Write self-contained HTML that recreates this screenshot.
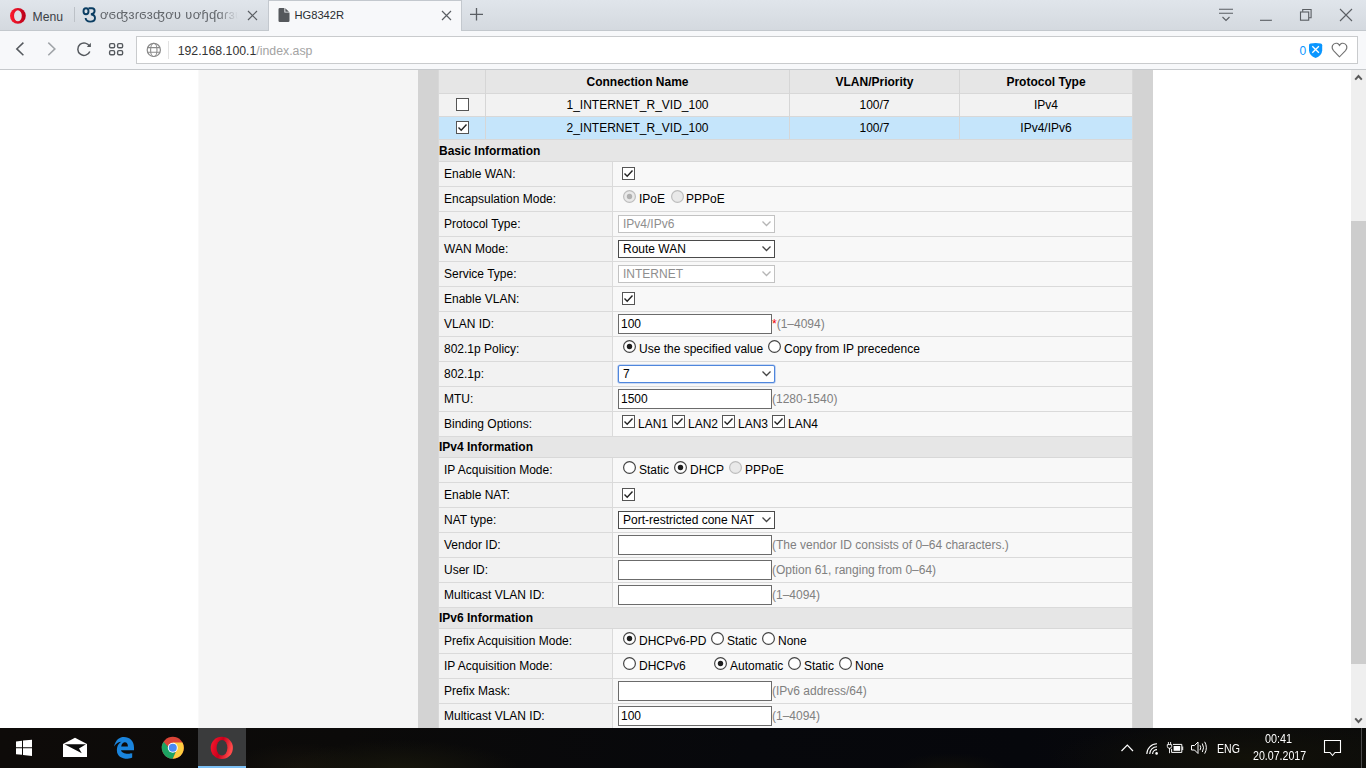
<!DOCTYPE html><html><head><meta charset="utf-8"><style>
*{margin:0;padding:0;box-sizing:border-box}
html,body{width:1366px;height:768px;overflow:hidden;background:#fff;font-family:"Liberation Sans",sans-serif;font-size:12px;color:#000;position:relative}
.abs{position:absolute}
#tabbar{left:0;top:0;width:1366px;height:31px;background:linear-gradient(#e0e5eb,#d4d9df);border-bottom:1px solid #c3c8cd}
#toolbar{left:0;top:31px;width:1366px;height:39px;background:#f7f8fa;border-bottom:1px solid #c6c9cc}
#addr{left:136px;top:36px;width:1222px;height:28px;background:#fff;border:1px solid #c9cbcd}
.t{white-space:nowrap;line-height:14px}
.cell{position:absolute;white-space:nowrap}
.lab{left:6px;top:5px}
.hint{color:#808080}
.inp{position:absolute;width:154px;height:20px;border:1px solid #6b6b6b;background:#fff;padding-left:2px;line-height:18px}
.sel{position:absolute;width:157px;height:18px;border:1px solid #4a4a4a;background:#fff;padding-left:4px;line-height:16px}
.sel.dis{border-color:#c2c2c2;color:#8e8e8e}
.sel svg{position:absolute;right:3.5px;top:5px}
.cb{position:absolute;width:13px;height:13px;border:1px solid #555;background:#fff}
.rd{position:absolute;width:13px;height:13px;border:1px solid #555;border-radius:50%;background:#fff}
.rd.on::after{content:"";position:absolute;left:2px;top:2px;width:7px;height:7px;border-radius:50%;background:#222}
.rd.dis{border-color:#b8b8b8;background:#f0f0f0}
.rd.dis.on::after{background:#b0b0b0}
</style></head><body>
<div id="tabbar" class="abs"></div>
<div id="toolbar" class="abs"></div>
<div class="abs" style="left:268px;top:0;width:194px;height:31px;background:#f7f8fa;border:1px solid #c3c8ce;border-bottom:none"></div>

<svg class="abs" style="left:0;top:0" width="1366" height="70" viewBox="0 0 1366 70">
 <defs><linearGradient id="og" x1="0" x2="1"><stop offset="0" stop-color="#ff1b2d"/><stop offset="1" stop-color="#b8001a"/></linearGradient></defs>
 <ellipse cx="17.9" cy="15.85" rx="7.9" ry="7.95" fill="url(#og)"/>
 <ellipse cx="17.9" cy="15.8" rx="3.9" ry="5.5" fill="#dde2e8"/>
 <ellipse cx="86" cy="11.2" rx="2.5" ry="3" fill="none" stroke="#0a3d62" stroke-width="1.9"/>
 <path d="M88.5 8.3 L92 8.3 Q94.6 8.3 94.6 11 Q94.6 13.6 91 14.3 Q95 15 95 18 Q95 21.6 90.2 21.6 Q86 21.6 85.6 18" fill="none" stroke="#0a3d62" stroke-width="1.9"/>
 <line x1="74.5" y1="7" x2="74.5" y2="22" stroke="#bcc1c7" stroke-width="1"/>
 <path d="M248 11 L257 20 M257 11 L248 20" stroke="#5a5e63" stroke-width="1.2"/>
 <path d="M278.5 9.3 Q278.5 8 279.8 8 L284.4 8 L284.4 12.6 L289.5 12.6 L289.5 20.7 Q289.5 22 288.2 22 L279.8 22 Q278.5 22 278.5 20.7 Z" fill="#55585c"/>
 <path d="M285.3 8.2 L285.3 11.7 L289 11.7 Z" fill="#55585c"/>
 <path d="M442 11 L451 20 M451 11 L442 20" stroke="#5a5e63" stroke-width="1.2"/>
 <path d="M476.5 8 L476.5 20.5 M470 14.3 L483 14.3" stroke="#5a5e63" stroke-width="1.3"/>
 <path d="M1219 9.3 L1233 9.3 M1219 13.3 L1233 13.3 M1222.5 17 L1226 20.5 L1229.5 17" fill="none" stroke="#5a5e63" stroke-width="1.1"/>
 <path d="M1260 20.3 L1272 20.3" stroke="#5a5e63" stroke-width="1.1"/>
 <path d="M1302.7 11.7 L1302.7 9.5 L1311.1 9.5 L1311.1 17.7 L1309 17.7" fill="none" stroke="#5a5e63" stroke-width="1.1"/>
 <rect x="1300.5" y="12" width="8.2" height="8.2" fill="none" stroke="#5a5e63" stroke-width="1.1"/>
 <path d="M1340 9 L1352 21 M1352 9 L1340 21" stroke="#5a5e63" stroke-width="1.1"/>
 <path d="M23.4 42.6 L16.8 48.9 L23.4 55.3" fill="none" stroke="#55595e" stroke-width="1.5"/>
 <path d="M48.3 42.6 L54.9 48.9 L48.3 55.3" fill="none" stroke="#a0a4a8" stroke-width="1.5"/>
 <path d="M89.6 46.5 A6.2 6.2 0 1 0 89.8 51.4" fill="none" stroke="#55595e" stroke-width="1.5"/>
 <path d="M86.8 46.9 L90.9 46.9 L90.9 42.8 Z" fill="#55595e"/>
 <rect x="109.6" y="43.6" width="5" height="4.2" rx="1.3" fill="none" stroke="#55595e" stroke-width="1.4"/>
 <rect x="117.6" y="43.6" width="5" height="4.2" rx="1.3" fill="none" stroke="#55595e" stroke-width="1.4"/>
 <rect x="109.6" y="50.6" width="5" height="4.2" rx="1.3" fill="none" stroke="#55595e" stroke-width="1.4"/>
 <rect x="117.6" y="50.6" width="5" height="4.2" rx="1.3" fill="none" stroke="#55595e" stroke-width="1.4"/>
</svg>
<div id="addr" class="abs"></div>

<svg class="abs" style="left:0;top:0" width="1366" height="70" viewBox="0 0 1366 70">
 <circle cx="153.8" cy="49.9" r="6.6" fill="none" stroke="#8a8a8a" stroke-width="1.2"/>
 <ellipse cx="153.8" cy="49.9" rx="3.2" ry="6.6" fill="none" stroke="#8a8a8a" stroke-width="1.1"/>
 <path d="M147.6 47.6 L160 47.6 M147.6 52.2 L160 52.2" stroke="#8a8a8a" stroke-width="1.1"/>
 <line x1="168.5" y1="41" x2="168.5" y2="59" stroke="#e2e2e2" stroke-width="1"/>
 <path d="M1309 45.3 Q1309 43.8 1310.5 43.5 Q1315.6 42.6 1320.7 43.5 Q1322.2 43.8 1322.2 45.3 L1322.2 50.5 Q1321.8 55.8 1315.6 57.9 Q1309.4 55.8 1309 50.5 Z" fill="#0a96ff"/>
 <path d="M1312.3 46.2 L1318.9 52.8 M1318.9 46.2 L1312.3 52.8" stroke="#fff" stroke-width="1.3"/>
 <path d="M1339.5 56.8 L1333.5 50.6 Q1331.4 48.3 1332.5 45.5 Q1334 42.7 1337 43.3 Q1338.6 43.7 1339.5 45.4 Q1340.4 43.7 1342 43.3 Q1345 42.7 1346.5 45.5 Q1347.6 48.3 1345.5 50.6 Z" fill="none" stroke="#707070" stroke-width="1.1"/>
</svg>
<div class="cell t" style="left:32.6px;top:10px;font-size:12.2px;color:#3b4046">Menu</div>
<div class="cell t" style="left:100px;top:8px;font-size:13px;letter-spacing:0.3px;color:#63676c;width:138px;overflow:hidden;-webkit-mask-image:linear-gradient(90deg,#000 85%,transparent)">ơϭʤɜɾϭɜʤơʋ ʋơɧʠɑɾɜʋ ɑ</div>
<div class="cell t" style="left:294.4px;top:8px;font-size:11.2px;color:#2a2d31">HG8342R</div>
<div class="cell t" style="left:177.7px;top:44px;font-size:12.3px;color:#333"><span>192.168.100.1</span><span style="color:#a3a3a3">/index.asp</span></div>
<div class="cell t" style="left:1299.5px;top:44px;font-size:12px;color:#0a96ff">0</div>
<div class="abs" style="left:198px;top:70px;width:220px;height:658px;background:#f5f5f5;border-left:1px solid #f9f9f9"></div>
<div class="abs" style="left:418px;top:70px;width:20px;height:658px;background:#d3d3d3"></div>
<div class="abs" style="left:1132px;top:70px;width:21px;height:658px;background:#d3d3d3"></div>
<div class="abs" style="left:438px;top:70px;width:694px;height:23px;background:#e6e6e6"></div>
<div class="abs" style="left:438px;top:93px;width:694px;height:1px;background:#d8d8d8"></div>
<div class="abs" style="left:438px;top:94px;width:694px;height:22px;background:#f2f2f2"></div>
<div class="abs" style="left:438px;top:116px;width:694px;height:1px;background:#d8d8d8"></div>
<div class="abs" style="left:438px;top:117px;width:694px;height:22px;background:#c5e5fb"></div>
<div class="abs" style="left:438px;top:139px;width:694px;height:1px;background:#d8d8d8"></div>
<div class="abs" style="left:485px;top:70px;width:1px;height:69px;background:#d6d6d6"></div>
<div class="abs" style="left:789px;top:70px;width:1px;height:69px;background:#d6d6d6"></div>
<div class="abs" style="left:959px;top:70px;width:1px;height:69px;background:#d6d6d6"></div>
<div class="cell t" style="left:486px;top:75px;width:303px;text-align:center;font-weight:bold;">Connection Name</div>
<div class="cell t" style="left:790px;top:75px;width:169px;text-align:center;font-weight:bold;">VLAN/Priority</div>
<div class="cell t" style="left:960px;top:75px;width:172px;text-align:center;font-weight:bold;">Protocol Type</div>
<div class="cb" style="left:456px;top:98px"></div>
<div class="cell t" style="left:486px;top:98px;width:303px;text-align:center;">1_INTERNET_R_VID_100</div>
<div class="cell t" style="left:790px;top:98px;width:169px;text-align:center;">100/7</div>
<div class="cell t" style="left:960px;top:98px;width:172px;text-align:center;">IPv4</div>
<div class="cb" style="left:456px;top:121px"><svg width="11" height="11" viewBox="0 0 11 11" style="position:absolute;left:0;top:0"><path d="M1.5 5.5 L4.2 8.2 L9.5 2.5" fill="none" stroke="#222" stroke-width="1.4"/></svg></div>
<div class="cell t" style="left:486px;top:121px;width:303px;text-align:center;">2_INTERNET_R_VID_100</div>
<div class="cell t" style="left:790px;top:121px;width:169px;text-align:center;">100/7</div>
<div class="cell t" style="left:960px;top:121px;width:172px;text-align:center;">IPv4/IPv6</div>
<div class="abs" style="left:438px;top:140px;width:694px;height:21px;background:#e6e6e6"></div>
<div class="abs" style="left:438px;top:161px;width:694px;height:1px;background:#d8d8d8"></div>
<div class="cell t" style="left:439px;top:144px;font-weight:bold">Basic Information</div>
<div class="abs" style="left:438px;top:162px;width:174px;height:24px;background:#f2f2f2"></div>
<div class="abs" style="left:612px;top:162px;width:1px;height:24px;background:#dadada"></div>
<div class="abs" style="left:613px;top:162px;width:519px;height:24px;background:#f8f8f8"></div>
<div class="abs" style="left:438px;top:186px;width:694px;height:1px;background:#dadada"></div>
<div class="cell t" style="left:444px;top:167px;">Enable WAN:</div>
<div class="cb" style="left:622px;top:167px"><svg width="11" height="11" viewBox="0 0 11 11" style="position:absolute;left:0;top:0"><path d="M1.5 5.5 L4.2 8.2 L9.5 2.5" fill="none" stroke="#222" stroke-width="1.4"/></svg></div>
<div class="abs" style="left:438px;top:187px;width:174px;height:24px;background:#f2f2f2"></div>
<div class="abs" style="left:612px;top:187px;width:1px;height:24px;background:#dadada"></div>
<div class="abs" style="left:613px;top:187px;width:519px;height:24px;background:#f8f8f8"></div>
<div class="abs" style="left:438px;top:211px;width:694px;height:1px;background:#dadada"></div>
<div class="cell t" style="left:444px;top:192px;">Encapsulation Mode:</div>
<svg class="abs" style="left:623px;top:190px" width="13" height="13" viewBox="0 0 13 13"><circle cx="6.5" cy="6.5" r="5.9" fill="#e9e9e9" stroke="#bdbdbd" stroke-width="1.2"/><circle cx="6.5" cy="6.5" r="2.7" fill="#b0b0b0"/></svg>
<div class="cell t" style="left:639px;top:192px;">IPoE</div>
<svg class="abs" style="left:671px;top:190px" width="13" height="13" viewBox="0 0 13 13"><circle cx="6.5" cy="6.5" r="5.9" fill="#e9e9e9" stroke="#bdbdbd" stroke-width="1.2"/></svg>
<div class="cell t" style="left:686px;top:192px;">PPPoE</div>
<div class="abs" style="left:438px;top:212px;width:174px;height:24px;background:#f2f2f2"></div>
<div class="abs" style="left:612px;top:212px;width:1px;height:24px;background:#dadada"></div>
<div class="abs" style="left:613px;top:212px;width:519px;height:24px;background:#f8f8f8"></div>
<div class="abs" style="left:438px;top:236px;width:694px;height:1px;background:#dadada"></div>
<div class="cell t" style="left:444px;top:217px;">Protocol Type:</div>
<div class="sel dis" style="left:618px;top:215px;width:157px;">IPv4/IPv6<svg width="9" height="6" viewBox="0 0 9 6"><path d="M0.5 0.5 L4.5 4.5 L8.5 0.5" fill="none" stroke="#b5b5b5" stroke-width="1.3"/></svg></div>
<div class="abs" style="left:438px;top:237px;width:174px;height:24px;background:#f2f2f2"></div>
<div class="abs" style="left:612px;top:237px;width:1px;height:24px;background:#dadada"></div>
<div class="abs" style="left:613px;top:237px;width:519px;height:24px;background:#f8f8f8"></div>
<div class="abs" style="left:438px;top:261px;width:694px;height:1px;background:#dadada"></div>
<div class="cell t" style="left:444px;top:242px;">WAN Mode:</div>
<div class="sel" style="left:618px;top:240px;width:157px;">Route WAN<svg width="9" height="6" viewBox="0 0 9 6"><path d="M0.5 0.5 L4.5 4.5 L8.5 0.5" fill="none" stroke="#444" stroke-width="1.3"/></svg></div>
<div class="abs" style="left:438px;top:262px;width:174px;height:24px;background:#f2f2f2"></div>
<div class="abs" style="left:612px;top:262px;width:1px;height:24px;background:#dadada"></div>
<div class="abs" style="left:613px;top:262px;width:519px;height:24px;background:#f8f8f8"></div>
<div class="abs" style="left:438px;top:286px;width:694px;height:1px;background:#dadada"></div>
<div class="cell t" style="left:444px;top:267px;">Service Type:</div>
<div class="sel dis" style="left:618px;top:265px;width:157px;">INTERNET<svg width="9" height="6" viewBox="0 0 9 6"><path d="M0.5 0.5 L4.5 4.5 L8.5 0.5" fill="none" stroke="#b5b5b5" stroke-width="1.3"/></svg></div>
<div class="abs" style="left:438px;top:287px;width:174px;height:24px;background:#f2f2f2"></div>
<div class="abs" style="left:612px;top:287px;width:1px;height:24px;background:#dadada"></div>
<div class="abs" style="left:613px;top:287px;width:519px;height:24px;background:#f8f8f8"></div>
<div class="abs" style="left:438px;top:311px;width:694px;height:1px;background:#dadada"></div>
<div class="cell t" style="left:444px;top:292px;">Enable VLAN:</div>
<div class="cb" style="left:622px;top:292px"><svg width="11" height="11" viewBox="0 0 11 11" style="position:absolute;left:0;top:0"><path d="M1.5 5.5 L4.2 8.2 L9.5 2.5" fill="none" stroke="#222" stroke-width="1.4"/></svg></div>
<div class="abs" style="left:438px;top:312px;width:174px;height:24px;background:#f2f2f2"></div>
<div class="abs" style="left:612px;top:312px;width:1px;height:24px;background:#dadada"></div>
<div class="abs" style="left:613px;top:312px;width:519px;height:24px;background:#f8f8f8"></div>
<div class="abs" style="left:438px;top:336px;width:694px;height:1px;background:#dadada"></div>
<div class="cell t" style="left:444px;top:317px;">VLAN ID:</div>
<div class="inp" style="left:618px;top:314px">100</div>
<div class="cell t" style="left:772px;top:317px;"><span style="color:#e00">*</span><span class="hint">(1–4094)</span></div>
<div class="abs" style="left:438px;top:337px;width:174px;height:24px;background:#f2f2f2"></div>
<div class="abs" style="left:612px;top:337px;width:1px;height:24px;background:#dadada"></div>
<div class="abs" style="left:613px;top:337px;width:519px;height:24px;background:#f8f8f8"></div>
<div class="abs" style="left:438px;top:361px;width:694px;height:1px;background:#dadada"></div>
<div class="cell t" style="left:444px;top:342px;">802.1p Policy:</div>
<svg class="abs" style="left:623px;top:340px" width="13" height="13" viewBox="0 0 13 13"><circle cx="6.5" cy="6.5" r="5.9" fill="#fff" stroke="#444" stroke-width="1.2"/><circle cx="6.5" cy="6.5" r="2.7" fill="#1e1e1e"/></svg>
<div class="cell t" style="left:639px;top:342px;">Use the specified value</div>
<svg class="abs" style="left:768px;top:340px" width="13" height="13" viewBox="0 0 13 13"><circle cx="6.5" cy="6.5" r="5.9" fill="#fff" stroke="#444" stroke-width="1.2"/></svg>
<div class="cell t" style="left:784px;top:342px;">Copy from IP precedence</div>
<div class="abs" style="left:438px;top:362px;width:174px;height:24px;background:#f2f2f2"></div>
<div class="abs" style="left:612px;top:362px;width:1px;height:24px;background:#dadada"></div>
<div class="abs" style="left:613px;top:362px;width:519px;height:24px;background:#f8f8f8"></div>
<div class="abs" style="left:438px;top:386px;width:694px;height:1px;background:#dadada"></div>
<div class="cell t" style="left:444px;top:367px;">802.1p:</div>
<div class="sel" style="left:618px;top:365px;width:157px;border-color:#4f86dc;border-radius:2px;box-shadow:0 0 0 0.6px rgba(80,135,225,0.55);">7<svg width="9" height="6" viewBox="0 0 9 6"><path d="M0.5 0.5 L4.5 4.5 L8.5 0.5" fill="none" stroke="#444" stroke-width="1.3"/></svg></div>
<div class="abs" style="left:438px;top:387px;width:174px;height:24px;background:#f2f2f2"></div>
<div class="abs" style="left:612px;top:387px;width:1px;height:24px;background:#dadada"></div>
<div class="abs" style="left:613px;top:387px;width:519px;height:24px;background:#f8f8f8"></div>
<div class="abs" style="left:438px;top:411px;width:694px;height:1px;background:#dadada"></div>
<div class="cell t" style="left:444px;top:392px;">MTU:</div>
<div class="inp" style="left:618px;top:389px">1500</div>
<div class="cell t" style="left:772px;top:392px;"><span class="hint">(1280-1540)</span></div>
<div class="abs" style="left:438px;top:412px;width:174px;height:24px;background:#f2f2f2"></div>
<div class="abs" style="left:612px;top:412px;width:1px;height:24px;background:#dadada"></div>
<div class="abs" style="left:613px;top:412px;width:519px;height:24px;background:#f8f8f8"></div>
<div class="abs" style="left:438px;top:436px;width:694px;height:1px;background:#dadada"></div>
<div class="cell t" style="left:444px;top:417px;">Binding Options:</div>
<div class="cb" style="left:622px;top:415px"><svg width="11" height="11" viewBox="0 0 11 11" style="position:absolute;left:0;top:0"><path d="M1.5 5.5 L4.2 8.2 L9.5 2.5" fill="none" stroke="#222" stroke-width="1.4"/></svg></div>
<div class="cell t" style="left:638px;top:417px;">LAN1</div>
<div class="cb" style="left:672px;top:415px"><svg width="11" height="11" viewBox="0 0 11 11" style="position:absolute;left:0;top:0"><path d="M1.5 5.5 L4.2 8.2 L9.5 2.5" fill="none" stroke="#222" stroke-width="1.4"/></svg></div>
<div class="cell t" style="left:688px;top:417px;">LAN2</div>
<div class="cb" style="left:722px;top:415px"><svg width="11" height="11" viewBox="0 0 11 11" style="position:absolute;left:0;top:0"><path d="M1.5 5.5 L4.2 8.2 L9.5 2.5" fill="none" stroke="#222" stroke-width="1.4"/></svg></div>
<div class="cell t" style="left:738px;top:417px;">LAN3</div>
<div class="cb" style="left:772px;top:415px"><svg width="11" height="11" viewBox="0 0 11 11" style="position:absolute;left:0;top:0"><path d="M1.5 5.5 L4.2 8.2 L9.5 2.5" fill="none" stroke="#222" stroke-width="1.4"/></svg></div>
<div class="cell t" style="left:788px;top:417px;">LAN4</div>
<div class="abs" style="left:438px;top:437px;width:694px;height:20px;background:#e6e6e6"></div>
<div class="abs" style="left:438px;top:457px;width:694px;height:1px;background:#d8d8d8"></div>
<div class="cell t" style="left:439px;top:440px;font-weight:bold">IPv4 Information</div>
<div class="abs" style="left:438px;top:458px;width:174px;height:24px;background:#f2f2f2"></div>
<div class="abs" style="left:612px;top:458px;width:1px;height:24px;background:#dadada"></div>
<div class="abs" style="left:613px;top:458px;width:519px;height:24px;background:#f8f8f8"></div>
<div class="abs" style="left:438px;top:482px;width:694px;height:1px;background:#dadada"></div>
<div class="cell t" style="left:444px;top:463px;">IP Acquisition Mode:</div>
<svg class="abs" style="left:623px;top:461px" width="13" height="13" viewBox="0 0 13 13"><circle cx="6.5" cy="6.5" r="5.9" fill="#fff" stroke="#444" stroke-width="1.2"/></svg>
<div class="cell t" style="left:639px;top:463px;">Static</div>
<svg class="abs" style="left:674px;top:461px" width="13" height="13" viewBox="0 0 13 13"><circle cx="6.5" cy="6.5" r="5.9" fill="#fff" stroke="#444" stroke-width="1.2"/><circle cx="6.5" cy="6.5" r="2.7" fill="#1e1e1e"/></svg>
<div class="cell t" style="left:690px;top:463px;">DHCP</div>
<svg class="abs" style="left:729px;top:461px" width="13" height="13" viewBox="0 0 13 13"><circle cx="6.5" cy="6.5" r="5.9" fill="#e9e9e9" stroke="#bdbdbd" stroke-width="1.2"/></svg>
<div class="cell t" style="left:745px;top:463px;">PPPoE</div>
<div class="abs" style="left:438px;top:483px;width:174px;height:24px;background:#f2f2f2"></div>
<div class="abs" style="left:612px;top:483px;width:1px;height:24px;background:#dadada"></div>
<div class="abs" style="left:613px;top:483px;width:519px;height:24px;background:#f8f8f8"></div>
<div class="abs" style="left:438px;top:507px;width:694px;height:1px;background:#dadada"></div>
<div class="cell t" style="left:444px;top:488px;">Enable NAT:</div>
<div class="cb" style="left:622px;top:488px"><svg width="11" height="11" viewBox="0 0 11 11" style="position:absolute;left:0;top:0"><path d="M1.5 5.5 L4.2 8.2 L9.5 2.5" fill="none" stroke="#222" stroke-width="1.4"/></svg></div>
<div class="abs" style="left:438px;top:508px;width:174px;height:24px;background:#f2f2f2"></div>
<div class="abs" style="left:612px;top:508px;width:1px;height:24px;background:#dadada"></div>
<div class="abs" style="left:613px;top:508px;width:519px;height:24px;background:#f8f8f8"></div>
<div class="abs" style="left:438px;top:532px;width:694px;height:1px;background:#dadada"></div>
<div class="cell t" style="left:444px;top:513px;">NAT type:</div>
<div class="sel" style="left:618px;top:511px;width:157px;">Port-restricted cone NAT<svg width="9" height="6" viewBox="0 0 9 6"><path d="M0.5 0.5 L4.5 4.5 L8.5 0.5" fill="none" stroke="#444" stroke-width="1.3"/></svg></div>
<div class="abs" style="left:438px;top:533px;width:174px;height:24px;background:#f2f2f2"></div>
<div class="abs" style="left:612px;top:533px;width:1px;height:24px;background:#dadada"></div>
<div class="abs" style="left:613px;top:533px;width:519px;height:24px;background:#f8f8f8"></div>
<div class="abs" style="left:438px;top:557px;width:694px;height:1px;background:#dadada"></div>
<div class="cell t" style="left:444px;top:538px;">Vendor ID:</div>
<div class="inp" style="left:618px;top:535px"></div>
<div class="cell t" style="left:772px;top:538px;"><span class="hint">(The vendor ID consists of 0–64 characters.)</span></div>
<div class="abs" style="left:438px;top:558px;width:174px;height:24px;background:#f2f2f2"></div>
<div class="abs" style="left:612px;top:558px;width:1px;height:24px;background:#dadada"></div>
<div class="abs" style="left:613px;top:558px;width:519px;height:24px;background:#f8f8f8"></div>
<div class="abs" style="left:438px;top:582px;width:694px;height:1px;background:#dadada"></div>
<div class="cell t" style="left:444px;top:563px;">User ID:</div>
<div class="inp" style="left:618px;top:560px"></div>
<div class="cell t" style="left:772px;top:563px;"><span class="hint">(Option 61, ranging from 0–64)</span></div>
<div class="abs" style="left:438px;top:583px;width:174px;height:24px;background:#f2f2f2"></div>
<div class="abs" style="left:612px;top:583px;width:1px;height:24px;background:#dadada"></div>
<div class="abs" style="left:613px;top:583px;width:519px;height:24px;background:#f8f8f8"></div>
<div class="abs" style="left:438px;top:607px;width:694px;height:1px;background:#dadada"></div>
<div class="cell t" style="left:444px;top:588px;">Multicast VLAN ID:</div>
<div class="inp" style="left:618px;top:585px"></div>
<div class="cell t" style="left:772px;top:588px;"><span class="hint">(1–4094)</span></div>
<div class="abs" style="left:438px;top:608px;width:694px;height:20px;background:#e6e6e6"></div>
<div class="abs" style="left:438px;top:628px;width:694px;height:1px;background:#d8d8d8"></div>
<div class="cell t" style="left:439px;top:611px;font-weight:bold">IPv6 Information</div>
<div class="abs" style="left:438px;top:629px;width:174px;height:24px;background:#f2f2f2"></div>
<div class="abs" style="left:612px;top:629px;width:1px;height:24px;background:#dadada"></div>
<div class="abs" style="left:613px;top:629px;width:519px;height:24px;background:#f8f8f8"></div>
<div class="abs" style="left:438px;top:653px;width:694px;height:1px;background:#dadada"></div>
<div class="cell t" style="left:444px;top:634px;">Prefix Acquisition Mode:</div>
<svg class="abs" style="left:623px;top:632px" width="13" height="13" viewBox="0 0 13 13"><circle cx="6.5" cy="6.5" r="5.9" fill="#fff" stroke="#444" stroke-width="1.2"/><circle cx="6.5" cy="6.5" r="2.7" fill="#1e1e1e"/></svg>
<div class="cell t" style="left:639px;top:634px;">DHCPv6-PD</div>
<svg class="abs" style="left:711px;top:632px" width="13" height="13" viewBox="0 0 13 13"><circle cx="6.5" cy="6.5" r="5.9" fill="#fff" stroke="#444" stroke-width="1.2"/></svg>
<div class="cell t" style="left:727px;top:634px;">Static</div>
<svg class="abs" style="left:762px;top:632px" width="13" height="13" viewBox="0 0 13 13"><circle cx="6.5" cy="6.5" r="5.9" fill="#fff" stroke="#444" stroke-width="1.2"/></svg>
<div class="cell t" style="left:778px;top:634px;">None</div>
<div class="abs" style="left:438px;top:654px;width:174px;height:24px;background:#f2f2f2"></div>
<div class="abs" style="left:612px;top:654px;width:1px;height:24px;background:#dadada"></div>
<div class="abs" style="left:613px;top:654px;width:519px;height:24px;background:#f8f8f8"></div>
<div class="abs" style="left:438px;top:678px;width:694px;height:1px;background:#dadada"></div>
<div class="cell t" style="left:444px;top:659px;">IP Acquisition Mode:</div>
<svg class="abs" style="left:623px;top:657px" width="13" height="13" viewBox="0 0 13 13"><circle cx="6.5" cy="6.5" r="5.9" fill="#fff" stroke="#444" stroke-width="1.2"/></svg>
<div class="cell t" style="left:639px;top:659px;">DHCPv6</div>
<svg class="abs" style="left:714px;top:657px" width="13" height="13" viewBox="0 0 13 13"><circle cx="6.5" cy="6.5" r="5.9" fill="#fff" stroke="#444" stroke-width="1.2"/><circle cx="6.5" cy="6.5" r="2.7" fill="#1e1e1e"/></svg>
<div class="cell t" style="left:730px;top:659px;">Automatic</div>
<svg class="abs" style="left:788px;top:657px" width="13" height="13" viewBox="0 0 13 13"><circle cx="6.5" cy="6.5" r="5.9" fill="#fff" stroke="#444" stroke-width="1.2"/></svg>
<div class="cell t" style="left:804px;top:659px;">Static</div>
<svg class="abs" style="left:839px;top:657px" width="13" height="13" viewBox="0 0 13 13"><circle cx="6.5" cy="6.5" r="5.9" fill="#fff" stroke="#444" stroke-width="1.2"/></svg>
<div class="cell t" style="left:855px;top:659px;">None</div>
<div class="abs" style="left:438px;top:679px;width:174px;height:24px;background:#f2f2f2"></div>
<div class="abs" style="left:612px;top:679px;width:1px;height:24px;background:#dadada"></div>
<div class="abs" style="left:613px;top:679px;width:519px;height:24px;background:#f8f8f8"></div>
<div class="abs" style="left:438px;top:703px;width:694px;height:1px;background:#dadada"></div>
<div class="cell t" style="left:444px;top:684px;">Prefix Mask:</div>
<div class="inp" style="left:618px;top:681px"></div>
<div class="cell t" style="left:772px;top:684px;"><span class="hint">(IPv6 address/64)</span></div>
<div class="abs" style="left:438px;top:704px;width:174px;height:24px;background:#f2f2f2"></div>
<div class="abs" style="left:612px;top:704px;width:1px;height:24px;background:#dadada"></div>
<div class="abs" style="left:613px;top:704px;width:519px;height:24px;background:#f8f8f8"></div>
<div class="abs" style="left:438px;top:728px;width:694px;height:1px;background:#dadada"></div>
<div class="cell t" style="left:444px;top:709px;">Multicast VLAN ID:</div>
<div class="inp" style="left:618px;top:706px">100</div>
<div class="cell t" style="left:772px;top:709px;"><span class="hint">(1–4094)</span></div>
<div class="abs" style="left:438px;top:70px;width:1px;height:658px;background:#d8d8d8"></div>
<div class="abs" style="left:1132px;top:70px;width:1px;height:658px;background:#d8d8d8"></div>
<div class="abs" style="left:1351px;top:70px;width:15px;height:658px;background:#efefef"></div>
<div class="abs" style="left:1351px;top:221px;width:15px;height:443px;background:#cdcdcd"></div>
<svg class="abs" style="left:1351px;top:70px" width="15" height="658" viewBox="1351 70 15 658"><path d="M1355.2 79.6 L1358.5 76 L1361.8 79.6" fill="none" stroke="#5a5a5a" stroke-width="2"/><path d="M1355.2 718.4 L1358.5 722 L1361.8 718.4" fill="none" stroke="#5a5a5a" stroke-width="2"/></svg>
<div class="abs" style="left:0;top:728px;width:1366px;height:40px;background:radial-gradient(ellipse 120px 30px at 400px 42px,#17160c,rgba(23,22,12,0) 100%),radial-gradient(ellipse 70px 25px at 300px 40px,#15120c,rgba(21,18,12,0) 100%),radial-gradient(ellipse 60px 20px at 950px 45px,#12110a,rgba(18,17,10,0) 100%),radial-gradient(ellipse 200px 40px at 1250px 30px,#121109,rgba(18,17,9,0) 100%),linear-gradient(90deg,#0e0b09,#0b0a09 25%,#07080c 55%,#06070c 75%,#0b0b0a)"></div>

<svg class="abs" style="left:0;top:728px" width="1366" height="40" viewBox="0 728 1366 40">
 <rect x="198" y="728" width="48" height="40" fill="#3a3b3c"/>
 <rect x="198" y="766" width="48" height="2" fill="#7cc0f5"/>
 <path d="M16 741.5 L22 740.8 L22 747.3 L16 747.3 Z M23 740.6 L32 739.8 L32 747.3 L23 747.3 Z M16 748.3 L22 748.3 L22 754.8 L16 754.2 Z M23 748.3 L32 748.3 L32 756 L23 755 Z" fill="#fff"/>
 <path d="M63 744 L75 737.8 L87 744 L87 757 L63 757 Z" fill="#fff"/>
 <path d="M64.5 744.3 L86 744.3 L79 748.6 L81.8 753.2 Z" fill="#0a0a0a"/>
 <path d="M134 750.3 L134 747.5 C134 741 129.5 737.1 124 737.1 C119.5 737.1 116 739.5 114 746.5 C116.5 743 119 742 121.5 741.8 C117.8 744 116.9 747 116.9 750.5 C116.9 755.8 121.5 758.8 127.5 758.8 C129.5 758.8 131 758.3 132.2 757.6 L132.2 753 C131 753.6 129.8 753.8 128 753.8 C124.5 753.8 121.5 752.5 121 750.3 Z M121.2 746.4 C121.6 743.5 123.6 742.2 124.8 742.2 C127 742.2 127.9 744 127.9 746.4 Z" fill="#1a84dc" fill-rule="evenodd"/>
 <circle cx="172.8" cy="747.8" r="11" fill="#db4437"/>
 <path d="M171 750 L163.6 741.75 A11 11 0 0 0 172.8 758.8 L176.5 750.5 Z" fill="#1da462"/>
 <path d="M176.5 750.5 L172.8 758.8 A11 11 0 0 0 182.44 742.5 L172.8 742.6 Z" fill="#ffcd40"/>
 <circle cx="172.8" cy="747.8" r="5" fill="#fff"/>
 <circle cx="172.8" cy="747.8" r="4" fill="#4a8af4"/>
 <defs><linearGradient id="og2" x1="0" x2="1" y1="0" y2="0.3"><stop offset="0" stop-color="#ff1a2e"/><stop offset="0.55" stop-color="#c8001c"/><stop offset="1" stop-color="#ff4a4a"/></linearGradient></defs>
 <ellipse cx="221.8" cy="747.9" rx="11.1" ry="11.2" fill="url(#og2)"/>
 <ellipse cx="222" cy="747.8" rx="5.4" ry="7.8" fill="#3a3b3c"/>
 <path d="M1121.5 751 L1127.3 745 L1133 751" fill="none" stroke="#fff" stroke-width="1.2"/>
 <path d="M1146.8 754 A10.2 10.2 0 0 1 1157 743.8 M1149.7 754 A7.3 7.3 0 0 1 1157 746.7 M1152.6 754 A4.4 4.4 0 0 1 1157 749.6" fill="none" stroke="#fff" stroke-width="1.1"/>
 <circle cx="1156.6" cy="753.4" r="1.3" fill="#fff"/>
 <path d="M1168.4 742 L1168.4 744.6 M1170.6 742 L1170.6 744.6 M1169.5 748 L1169.5 753.2" stroke="#fff" stroke-width="0.9"/>
 <path d="M1167.3 744.6 L1171.7 744.6 L1171.7 746.3 Q1171.7 748.3 1169.5 748.3 Q1167.3 748.3 1167.3 746.3 Z" fill="none" stroke="#fff" stroke-width="0.9"/>
 <path d="M1173 744.4 L1181.8 744.4 L1181.8 752.4 L1171.6 752.4 L1171.6 748.8" fill="none" stroke="#fff" stroke-width="1"/>
 <rect x="1173.6" y="746" width="6.6" height="4.8" fill="#fff"/>
 <rect x="1182.2" y="746.5" width="1" height="3.6" fill="#fff"/>
 <path d="M1191.5 745.5 L1194.5 745.5 L1198 742 L1198 753.5 L1194.5 750 L1191.5 750 Z" fill="none" stroke="#fff" stroke-width="1"/>
 <path d="M1200 745.3 Q1201.5 747.7 1200 750.2 M1202.3 743.5 Q1204.8 747.7 1202.3 752 M1204.7 741.8 Q1208 747.7 1204.7 753.6" fill="none" stroke="#fff" stroke-width="1"/>
 <path d="M1324.5 740.5 L1340.5 740.5 L1340.5 752.5 L1335 752.5 L1332.5 755.5 L1330 752.5 L1324.5 752.5 Z" fill="none" stroke="#fff" stroke-width="1.1"/>
 <line x1="1361.5" y1="728" x2="1361.5" y2="768" stroke="#4a4a4a" stroke-width="1"/>
</svg>
<div class="cell t" style="left:1217px;top:742px;font-size:12px;color:#fff;transform:scaleX(0.88);transform-origin:0 0">ENG</div>
<div class="cell t" style="left:1265px;top:732px;font-size:12px;color:#fff;transform:scaleX(0.9);transform-origin:0 0">00:41</div>
<div class="cell t" style="left:1253px;top:749px;font-size:12px;color:#fff;transform:scaleX(0.885);transform-origin:0 0">20.07.2017</div>
</body></html>
